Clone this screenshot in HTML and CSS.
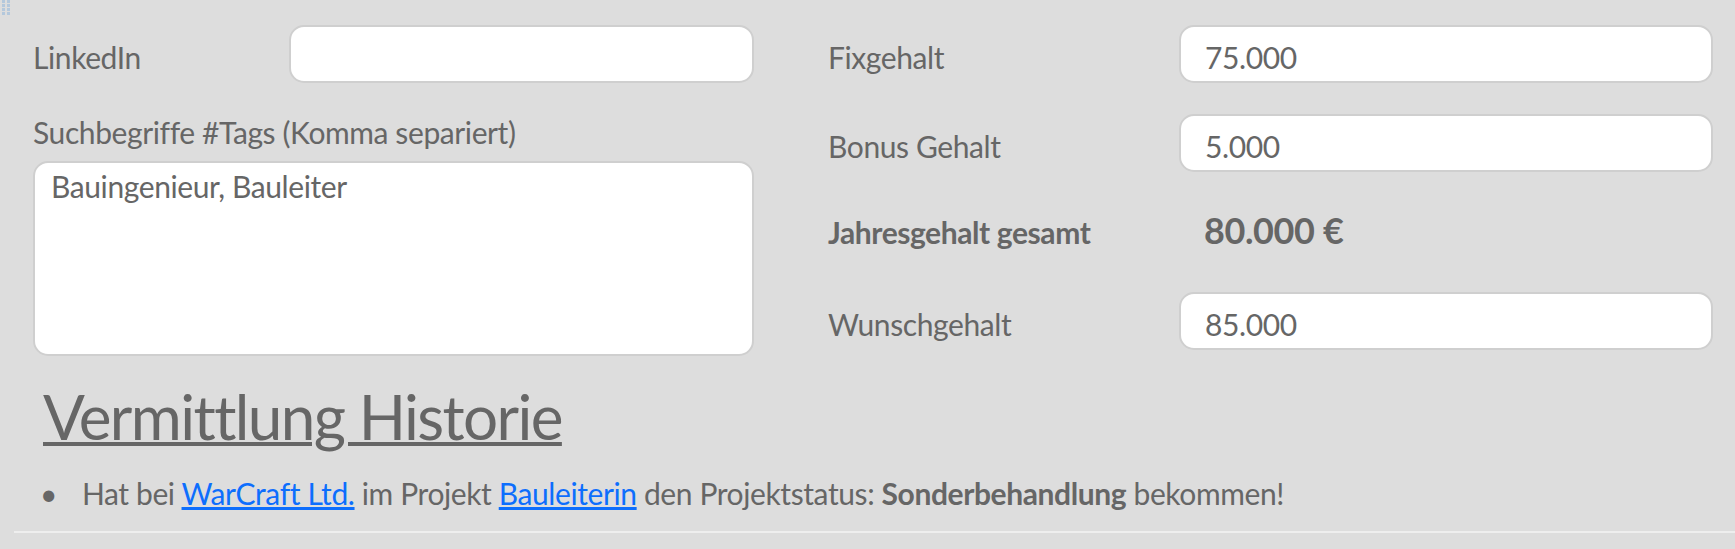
FILE: index.html
```html
<!DOCTYPE html>
<html lang="de">
<head>
    <meta charset="utf-8">
    <title>Kandidat</title>
    <link rel="stylesheet" href="styles.css">
</head>
<body>
    <!-- Griff zum Verschieben -->
    <div class="grip">
        <svg width="12" height="17" viewBox="0 0 12 17">
            <g fill="#b4c8dc">
                <rect x="2" y="0" width="3" height="3"/><rect x="7" y="0" width="3" height="3"/>
                <rect x="2" y="4" width="3" height="3"/><rect x="7" y="4" width="3" height="3"/>
                <rect x="2" y="8" width="3" height="3"/><rect x="7" y="8" width="3" height="3"/>
                <rect x="2" y="12" width="3" height="3"/><rect x="7" y="12" width="3" height="3"/>
            </g>
        </svg>
    </div>

    <div class="profile">
        <div class="col col-left">
            <div class="field-row">
                <label class="field-label" for="linkedin">LinkedIn</label>
                <input class="field-input" type="text" id="linkedin" name="linkedin">
            </div>
            <div class="field-stack">
                <label class="field-label" for="tags">Suchbegriffe #Tags (Komma separiert)</label>
                <textarea class="field-area" id="tags" name="tags">Bauingenieur, Bauleiter</textarea>
            </div>
        </div>

        <div class="col col-right">
            <div class="field-row">
                <label class="field-label" for="fixgehalt">Fixgehalt</label>
                <input class="field-input" type="text" id="fixgehalt" name="fixgehalt" value="75.000">
            </div>
            <div class="field-row">
                <label class="field-label" for="bonus">Bonus Gehalt</label>
                <input class="field-input" type="text" id="bonus" name="bonus" value="5.000">
            </div>
            <div class="field-row total-row">
                <span class="field-label total-label">Jahresgehalt gesamt</span>
                <span class="total-value">80.000 €</span>
            </div>
            <div class="field-row">
                <label class="field-label" for="wunsch">Wunschgehalt</label>
                <input class="field-input" type="text" id="wunsch" name="wunsch" value="85.000">
            </div>
        </div>
    </div>

    <!-- Vermittlung Historie -->
    <div class="history">
        <h2>Vermittlung Historie</h2>
        <ul class="history-list">
            <li>Hat bei <a href="#">WarCraft Ltd.</a> im Projekt <a href="#">Bauleiterin</a> den Projektstatus: <b>Sonderbehandlung</b> bekommen!</li>
        </ul>
    </div>
    <hr class="divider">
</body>
</html>
```

FILE: styles.css
```css
body {
    font-family: Lato, "Open Sans", sans-serif;
    font-size: 30px;
    line-height: 36px;
    letter-spacing: -0.4px;
    color: #666;
    background-color: #dddddd;
    margin: 0;
    padding: 0;
}

.grip {
    position: absolute;
    top: 0;
    left: 0;
    line-height: 0;
}

.profile {
    display: grid;
    grid-template-columns: 721px 885px;
    column-gap: 74px;
    padding: 25px 22px 0 33px;
}

.col {
    display: flex;
    flex-direction: column;
    gap: 31px;
}

.field-row {
    display: flex;
    align-items: baseline;
    height: 58px;
}

.col-left .field-label {
    width: 256px;
    flex-shrink: 0;
}

.col-right .field-label {
    width: 351px;
    flex-shrink: 0;
}

.field-input {
    flex: 1;
    box-sizing: border-box;
    height: 58px;
    padding: 12px 24px 6px;
    font-family: inherit;
    font-size: 30px;
    line-height: 36px;
    letter-spacing: -0.4px;
    color: #666;
    background-color: white;
    border: 2px solid #cfcfcf;
    border-radius: 15px;
    outline: none;
}

.field-stack .field-label {
    display: block;
    width: auto;
}

.field-area {
    display: block;
    box-sizing: border-box;
    width: 100%;
    height: 195px;
    margin-top: 11px;
    padding: 5px 16px;
    font-family: inherit;
    font-size: 30px;
    line-height: 36px;
    letter-spacing: -0.4px;
    color: #666;
    background-color: white;
    border: 2px solid #cfcfcf;
    border-radius: 15px;
    resize: none;
    outline: none;
}

.total-row {
    box-sizing: border-box;
    padding-top: 6px;
}

.total-label {
    font-weight: bold;
}

.total-value {
    padding-left: 25px;
    font-size: 36px;
    line-height: 43px;
    font-weight: bold;
}

.history {
    padding-left: 43px;
}

.history h2 {
    margin: 22px 0 0;
    font-size: 62px;
    line-height: 77px;
    font-weight: normal;
    letter-spacing: -1.6px;
    text-decoration: underline;
    text-decoration-thickness: 4px;
}

.history-list {
    list-style: none;
    margin: 20px 0 0 -3px;
    padding: 0;
}

.history-list li::before {
    content: "•";
    display: inline-block;
    width: 42px;
}

.history-list a {
    color: #0d6efd;
}

.divider {
    margin: 20px 0 0 14px;
    border: none;
    border-top: 2px solid #eeeeee;
}
```
